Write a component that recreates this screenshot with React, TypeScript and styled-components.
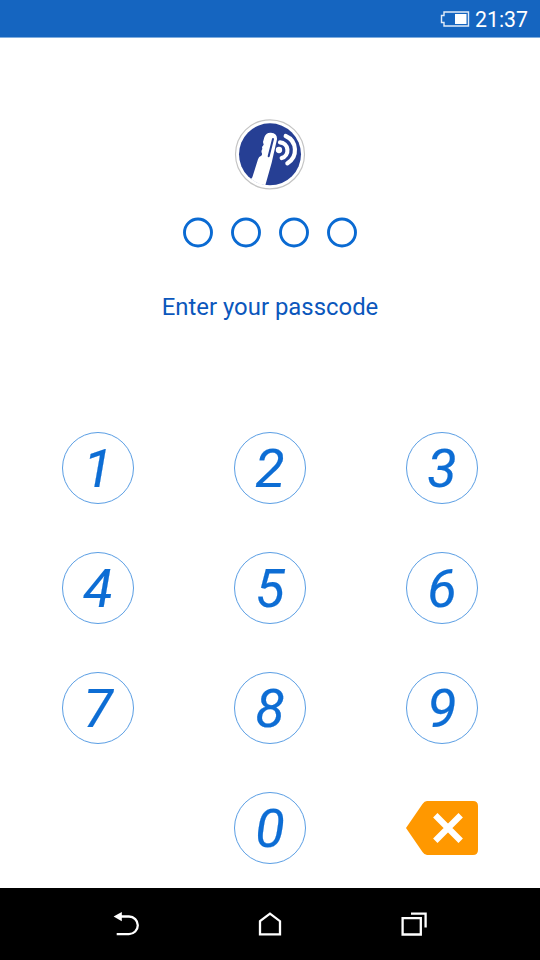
import React from 'react';
import styled, { createGlobalStyle } from 'styled-components';

const GlobalStyle = createGlobalStyle`
  * { box-sizing: border-box; }
  html, body { margin: 0; padding: 0; background: #fff; }
  body { font-family: Roboto, 'Liberation Sans', sans-serif; }
`;

const Screen = styled.div`
  width: 540px;
  height: 960px;
  display: flex;
  flex-direction: column;
  background: #fff;
  overflow: hidden;
`;

const StatusBar = styled.header`
  height: 38px;
  flex: none;
  display: flex;
  align-items: center;
  justify-content: flex-end;
  gap: 5px;
  padding: 2px 12px 0 0;
  background: #1565c0;
  border-bottom: 1px solid #7fadde;
`;

const Clock = styled.time`
  color: #fff;
  font-size: 21.3px;
  line-height: 24px;
  padding-top: 1px;
`;

const Content = styled.main`
  flex: 1;
  display: flex;
  flex-direction: column;
  align-items: center;
  padding-top: 80px;
`;

const Logo = styled.svg`
  display: block;
  width: 72px;
  height: 73px;
`;

const Dots = styled.div`
  display: flex;
  gap: 18px;
  margin-top: 26px;
`;

const DotIcon = styled.svg`
  display: block;
  width: 30px;
  height: 31px;
`;

const Prompt = styled.p`
  margin: 42px 0 0;
  height: 34px;
  line-height: 34px;
  font-size: 23.9px;
  color: #0b57bc;
  white-space: nowrap;
`;

const Keypad = styled.div`
  display: grid;
  grid-template-columns: repeat(3, 72px);
  grid-auto-rows: 72px;
  column-gap: 100px;
  row-gap: 48px;
  margin-top: 108px;
`;

const Key = styled.button<{ $column?: number }>`
  grid-column: ${({ $column }) => $column ?? 'auto'};
  display: flex;
  align-items: center;
  justify-content: center;
  padding: 2px 0 0;
  border: 1px solid #5a9ee4;
  border-radius: 50%;
  background: transparent;
  color: #0d6dd4;
  font-family: inherit;
  font-size: 54px;
  font-style: italic;
  line-height: 68px;
  -webkit-text-stroke: 0.2px #0d6dd4;
`;

const EraseKey = styled.button`
  display: flex;
  align-items: center;
  padding: 0;
  border: 0;
  background: transparent;
`;

const NavBar = styled.nav`
  height: 72px;
  flex: none;
  display: grid;
  grid-template-columns: repeat(3, 144px);
  justify-content: center;
  align-items: center;
  justify-items: center;
  background: #000;
`;

const BatteryIcon = () => (
  <svg width="30" height="17" viewBox="0 0 30 17" fill="none">
    <path d="M4 1H28.5V15H4V11.5H1.5V4.5H4Z" stroke="#fff" strokeOpacity=".88" strokeWidth="1.4" />
    <rect x="15" y="3" width="11.5" height="10" fill="#fff" />
  </svg>
);

const KeyLogo = () => (
  <Logo viewBox="12 12 216 219">
    <circle cx="120" cy="121" r="103.5" fill="#fff" stroke="#c4c4c4" strokeWidth="3.5" />
    <circle cx="120" cy="121" r="93" fill="#263f94" />
    <path
      d="M103 70Q107 55 123 56Q142 57 141 76L125 146L106 214Q83 211 63 195L67 190L84 136Q86 127 94 125Q98 121 95 116Q93 111 97 105L96 99L101 92L99 84Z"
      fill="#fff"
    />
    <path d="M129 75L116 127" stroke="#263f94" strokeWidth="6" strokeLinecap="round" />
    <circle cx="147" cy="108" r="9.5" fill="#fff" />
    <path
      d="M150 85A24 24 0 0 1 155 132M167 66A46 46 0 0 1 172 148"
      fill="none"
      stroke="#fff"
      strokeWidth="12.5"
      strokeLinecap="round"
    />
  </Logo>
);

const Dot = () => (
  <DotIcon viewBox="0 0 30 31">
    <circle cx="15" cy="15.5" r="13.5" fill="none" stroke="#0a6ad2" strokeWidth="2.9" />
  </DotIcon>
);

const EraseIcon = () => (
  <svg width="72" height="54" viewBox="0 0 72 54">
    <path d="M21 0H67Q72 0 72 5V49Q72 54 67 54H21Q18.5 54 16.5 51L0 27L16.5 3Q18.5 0 21 0Z" fill="#ff9800" />
    <path d="M29.3 14.3L54.7 39.7M54.7 14.3L29.3 39.7" stroke="#fff" strokeWidth="6.2" />
  </svg>
);

const BackIcon = () => (
  <svg width="26" height="26" viewBox="0 0 26 26">
    <path d="M7 5.5H16A8.8 8.8 0 0 1 16 23.1H3.7" fill="none" stroke="#fff" strokeWidth="2.3" />
    <path d="M.6 5.5L8.8 1V10.2Z" fill="#fff" />
  </svg>
);

const HomeIcon = () => (
  <svg width="24" height="26" viewBox="0 0 24 26">
    <path d="M2 10.2L12 2.7L22 10.2V23.3H2Z" fill="none" stroke="#fff" strokeWidth="2.3" />
  </svg>
);

const RecentIcon = () => (
  <svg width="28" height="26" viewBox="0 0 28 26" fill="none" stroke="#fff" strokeWidth="2.3">
    <path d="M2.6 7.1H20.8V23.5H2.6ZM11 2.6H25.6V16.5" />
  </svg>
);

const digits = [1, 2, 3, 4, 5, 6, 7, 8, 9];

export default function App() {
  return (
    <>
      <GlobalStyle />
      <Screen>
        <StatusBar>
          <BatteryIcon />
          <Clock>21:37</Clock>
        </StatusBar>
        <Content>
          <KeyLogo />
          <Dots>
            {[0, 1, 2, 3].map((i) => (
              <Dot key={i} />
            ))}
          </Dots>
          <Prompt>Enter your passcode</Prompt>
          <Keypad>
            {digits.map((d) => (
              <Key key={d}>{d}</Key>
            ))}
            <Key $column={2}>0</Key>
            <EraseKey aria-label="Erase">
              <EraseIcon />
            </EraseKey>
          </Keypad>
        </Content>
        <NavBar>
          <BackIcon />
          <HomeIcon />
          <RecentIcon />
        </NavBar>
      </Screen>
    </>
  );
}
